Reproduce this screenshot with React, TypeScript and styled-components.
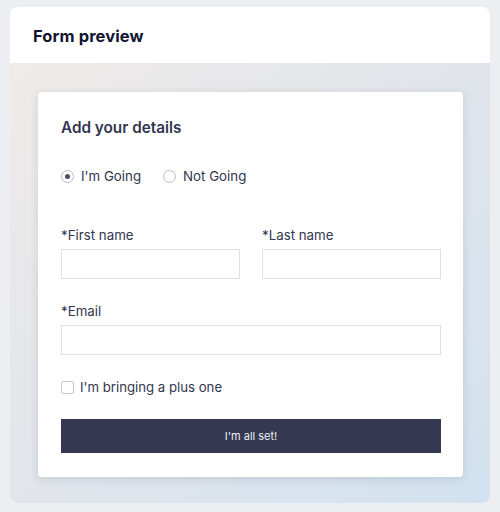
import React from "react";
import styled, { createGlobalStyle } from "styled-components";

const Global = createGlobalStyle`
  html, body { margin: 0; padding: 0; background: #eceef2; }
  body { font-family: "Inter", "Noto Sans", sans-serif; color: #32364e; }
  * { box-sizing: border-box; }
`;

const Page = styled.div`
  width: 500px;
  height: 512px;
  padding: 7px 10px 9px 10px;
`;

const Panel = styled.div`
  height: 100%;
  border-radius: 8px;
  overflow: hidden;
  display: flex;
  flex-direction: column;
`;

const Header = styled.div`
  flex: 0 0 56px;
  background: #ffffff;
  display: flex;
  align-items: center;
  padding-left: 23px;
  padding-top: 2px;
  font-size: 16.5px;
  font-weight: 700;
  color: #111531;
  letter-spacing: 0.1px;
`;

const Stage = styled.div`
  flex: 1;
  min-height: 0;
  background: linear-gradient(135deg, #efebe9 0%, #e2e5ea 45%, #d2e2f0 100%);
  padding: 29px 27px 26px 28px;
`;

const Card = styled.div`
  background: #ffffff;
  border-radius: 4px;
  box-shadow: 0 2px 10px rgba(40, 50, 80, 0.14);
  padding: 26px 22px 24px 23px;
  display: flex;
  flex-direction: column;
`;

const Title = styled.div`
  font-size: 15.3px;
  font-weight: 600;
  color: #32364e;
  line-height: 20px;
`;

const RadioRow = styled.div`
  display: flex;
  gap: 22px;
  margin-top: 28px;
  height: 20px;
  align-items: center;
`;

const Option = styled.label`
  display: flex;
  align-items: center;
  gap: 7px;
  font-size: 13.3px;
`;

const Radio = styled.span<{ $on?: boolean }>`
  width: 13px;
  height: 13px;
  border-radius: 50%;
  border: 1px solid #b9bcc6;
  display: flex;
  align-items: center;
  justify-content: center;
  &::after {
    content: "";
    width: 5px;
    height: 5px;
    border-radius: 50%;
    background: ${(p) => (p.$on ? "#4b4f63" : "transparent")};
  }
`;

const Row = styled.div`
  display: grid;
  grid-template-columns: 1fr 1fr;
  column-gap: 22px;
  margin-top: 40px;
`;

const Field = styled.div<{ $mt?: number }>`
  display: flex;
  flex-direction: column;
  margin-top: ${(p) => p.$mt ?? 0}px;
`;

const Label = styled.div`
  font-size: 13.3px;
  line-height: 18px;
  margin-bottom: 5px;
`;

const Input = styled.div`
  height: 30px;
  border: 1px solid #dfe0e4;
  background: #fff;
`;

const CheckRow = styled.label`
  display: flex;
  align-items: center;
  gap: 6px;
  margin-top: 24px;
  font-size: 13.2px;
  height: 16px;
`;

const Box = styled.span`
  width: 13px;
  height: 13px;
  border: 1px solid #c7c9d1;
  border-radius: 2px;
`;

const Button = styled.div`
  margin-top: 24px;
  height: 34px;
  background: #343851;
  color: #eef0f5;
  font-size: 11px;
  display: flex;
  align-items: center;
  justify-content: center;
`;

export default function App() {
  return (
    <>
      <Global />
      <Page>
        <Panel>
          <Header>Form preview</Header>
          <Stage>
            <Card>
              <Title>Add your details</Title>
              <RadioRow>
                <Option>
                  <Radio $on />
                  I'm Going
                </Option>
                <Option>
                  <Radio />
                  Not Going
                </Option>
              </RadioRow>
              <Row>
                <Field>
                  <Label>*First name</Label>
                  <Input />
                </Field>
                <Field>
                  <Label>*Last name</Label>
                  <Input />
                </Field>
              </Row>
              <Field $mt={23}>
                <Label>*Email</Label>
                <Input />
              </Field>
              <CheckRow>
                <Box />
                I'm bringing a plus one
              </CheckRow>
              <Button>I'm all set!</Button>
            </Card>
          </Stage>
        </Panel>
      </Page>
    </>
  );
}
